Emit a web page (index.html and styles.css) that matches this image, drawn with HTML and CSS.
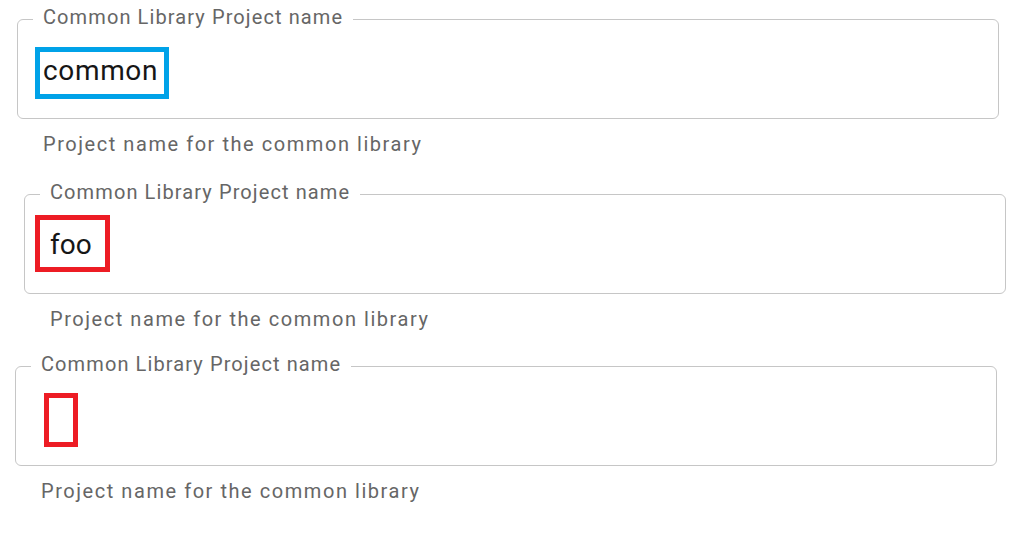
FILE: index.html
```html
<!DOCTYPE html>
<html lang="en">
<head>
<meta charset="utf-8">
<title>Common Library Project name</title>
<link rel="stylesheet" href="styles.css">
</head>
<body>
  <div class="field field-1">
    <fieldset class="outline">
      <legend class="label">Common Library Project name</legend>
      <div class="control">
        <span class="mark mark-blue">common</span>
      </div>
    </fieldset>
    <p class="helper">Project name for the common library</p>
  </div>

  <div class="field field-2">
    <fieldset class="outline">
      <legend class="label">Common Library Project name</legend>
      <div class="control">
        <span class="mark mark-red">foo</span>
      </div>
    </fieldset>
    <p class="helper">Project name for the common library</p>
  </div>

  <div class="field field-3">
    <fieldset class="outline">
      <legend class="label">Common Library Project name</legend>
      <div class="control">
        <span class="mark mark-red mark-empty"></span>
      </div>
    </fieldset>
    <p class="helper">Project name for the common library</p>
  </div>
</body>
</html>
```

FILE: styles.css
```css
html, body {
  margin: 0;
  padding: 0;
  background: #ffffff;
}

body {
  font-family: Roboto, "Liberation Sans", Arial, sans-serif;
  overflow: hidden;
}

.field {
  width: 982px;
}

.outline {
  margin: 0;
  padding: 0 0 0 15px;
  border: 1px solid #c6c6c6;
  border-radius: 6px;
  min-width: 0;
}

.label {
  margin: 0;
  padding: 0 10px 4px;
  font-size: 20px;
  line-height: 20px;
  letter-spacing: 1.1px;
  color: #666666;
}

.control {
  height: 87px;
  display: flex;
  align-items: flex-start;
}

.mark {
  display: inline-block;
  box-sizing: border-box;
  border: 5px solid #ed1c24;
  font-size: 28px;
  color: #161616;
  white-space: nowrap;
}

.mark-blue {
  border-color: #00a2e8;
  letter-spacing: 0.65px;
}

.helper {
  margin: 13px 0 0 26px;
  font-size: 20px;
  line-height: 24px;
  letter-spacing: 1.55px;
  color: #666666;
}

/* field 1 */
.field-1 {
  margin: 7px 0 0 17px;
}
.field-1 .mark {
  margin: 15.5px 0 0 2px;
  height: 52px;
  padding: 0 6px 5px 3px;
  line-height: 37px;
}

/* field 2 */
.field-2 {
  margin: 26px 0 0 24px;
}
.field-2 .mark {
  margin: 9px 0 0 -5px;
  height: 57px;
  padding: 4px 13px 1px 10px;
  line-height: 42px;
}

/* field 3 */
.field-3 {
  margin: 23px 0 0 15px;
}
.field-3 .mark {
  margin: 14.5px 0 0 13px;
  width: 34px;
  height: 54px;
}
```
